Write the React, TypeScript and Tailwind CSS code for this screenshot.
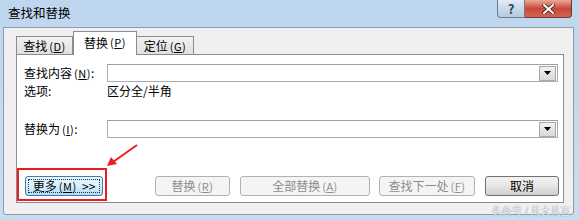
import React from "react";

const font = { fontFamily: '"Noto Sans CJK SC", "Noto Sans", sans-serif' };

function U({ c }: { c: string }) {
  return (
    <span className="text-[11px] ml-[2px] tracking-[0.5px]">
      (<span className="underline underline-offset-1">{c}</span>)
    </span>
  );
}

function Combo({ w }: { w: string }) {
  return (
    <div className={`h-[18px] ${w} bg-white border border-[#abadb3] border-t-[#a0a0a0] flex items-center justify-end pr-[1px]`}>
      <div className="w-[17px] h-[15px] bg-gradient-to-b from-[#f2f2f2] to-[#d8d8d8] border border-[#a9a9a9] flex items-center justify-center">
        <svg width="7" height="4" viewBox="0 0 7 4">
          <path d="M0 0 H7 L3.5 4 Z" fill="#000" />
        </svg>
      </div>
    </div>
  );
}

function Btn({
  children,
  w,
  disabled,
  className = "",
}: {
  children: React.ReactNode;
  w: string;
  disabled?: boolean;
  className?: string;
}) {
  if (disabled) {
    return (
      <div
        className={`${w} h-[20px] rounded-[3px] border border-[#adb2b5] bg-[#f4f4f4] text-[#8d8d8d] flex items-center justify-center text-[12px] ${className}`}
      >
        {children}
      </div>
    );
  }
  return (
    <div
      className={`${w} h-[20px] rounded-[3px] border border-[#707070] bg-gradient-to-b from-[#f3f3f3] via-[#e6e6e6] to-[#d0d0d0] text-black flex items-center justify-center text-[12px] ${className}`}
    >
      {children}
    </div>
  );
}

export default function App() {
  return (
    <div
      className="relative w-[579px] h-[220px] overflow-hidden bg-gradient-to-b from-[#bfd6ef] to-[#c9ddf2]"
      style={font}
    >
      {/* title bar */}
      <div className="h-[27px] flex items-start">
        <div className="pl-[8px] pt-[4px] text-[12.5px] text-black leading-[18px]">查找和替换</div>
        <div className="ml-auto mr-[7px] flex">
          <div className="w-[28px] h-[18px] rounded-bl-[4px] border border-t-0 border-[#6b7c92] bg-gradient-to-b from-[#e4edf7] via-[#c9d8ea] to-[#b7cbe2] flex items-center justify-center text-[13px] font-bold text-[#36465a] leading-none">
            ?
          </div>
          <div className="w-[47px] h-[18px] rounded-br-[4px] border border-t-0 border-l-0 border-[#6b3a36] bg-gradient-to-b from-[#e8a898] via-[#c9483a] to-[#d5624f] flex items-center justify-center">
            <svg width="13" height="10" viewBox="0 0 13 10">
              <path d="M2 1 L11 9 M11 1 L2 9" stroke="#4a2520" strokeWidth="3.6" strokeLinecap="square" />
              <path d="M2 1 L11 9 M11 1 L2 9" stroke="#ffffff" strokeWidth="2" strokeLinecap="square" />
            </svg>
          </div>
        </div>
      </div>

      {/* client */}
      <div className="ml-[3px] w-[571px] h-[188px] bg-[#f0f0f0] border border-[#8d9aab] rounded-b-[3px] pt-[3px] pl-[12px]">
        {/* tabs */}
        <div className="flex items-end h-[23px] relative z-10">
          <div className="w-[57px] h-[18px] border border-b-0 border-[#898c95] bg-gradient-to-b from-[#f2f2f2] to-[#e0e0e0] flex items-center justify-center text-[12px] text-black pt-[1px]">
            查找<U c="D" />
          </div>
          <div className="w-[64px] h-[24px] -mb-[1px] border border-b-0 border-[#898c95] bg-white flex items-center justify-center text-[12px] text-black pb-[2px]">
            替换<U c="P" />
          </div>
          <div className="w-[57px] h-[18px] border border-b-0 border-l-0 border-[#898c95] bg-gradient-to-b from-[#f2f2f2] to-[#e0e0e0] flex items-center justify-center text-[12px] text-black pt-[1px]">
            定位<U c="G" />
          </div>
        </div>
        {/* panel */}
        <div className="w-[548px] h-[149px] bg-white border border-[#898c95] pl-[7px] pt-[9px] text-[12px] text-black">
          <div className="flex h-[18px] items-center">
            <div className="w-[83px]">
              查找内容<U c="N" />:
            </div>
            <Combo w="w-[451px]" />
          </div>
          <div className="flex h-[16px] items-center mt-[1px]">
            <div className="w-[83px]">选项:</div>
            <div>区分全/半角</div>
          </div>
          <div className="flex h-[18px] items-center mt-[21px]">
            <div className="w-[83px]">
              替换为<U c="I" />:
            </div>
            <Combo w="w-[451px]" />
          </div>
          <div className="flex mt-[38px] pl-[1px]">
            <div className="w-[78px] h-[20px] rounded-[3px] border border-[#3c7fb1] bg-gradient-to-b from-[#eaf6fd] via-[#d9f0fc] to-[#a7d9f5] p-[2px]">
              <div className="w-full h-full border border-dotted border-[#333] flex items-center justify-center text-[12px] text-black">
                更多<U c="M" />&nbsp;&nbsp;&gt;&gt;
              </div>
            </div>
            <Btn w="w-[75px]" disabled className="ml-[52px]">
              替换<U c="R" />
            </Btn>
            <Btn w="w-[130px]" disabled className="ml-[10px]">
              全部替换<U c="A" />
            </Btn>
            <Btn w="w-[96px]" disabled className="ml-[9px]">
              查找下一处<U c="F" />
            </Btn>
            <Btn w="w-[74px]" className="ml-[10px]">
              取消
            </Btn>
          </div>
        </div>
      </div>

      {/* red highlight annotation */}
      <div className="absolute left-[17px] top-[168px] w-[90px] h-[33px] border-2 border-[#ee1c1c]" />
      <svg className="absolute left-[100px] top-[140px]" width="45" height="30" viewBox="0 0 45 30">
        <path d="M37 5 L13 22" stroke="#ee1c1c" strokeWidth="2" />
        <path d="M7 26 L11 17 L17 24 Z" fill="#ee1c1c" />
      </svg>

      {/* watermark */}
      <div className="absolute left-[492px] top-[205px] text-[10px] text-white/90 leading-[12px] whitespace-nowrap [text-shadow:0_0_1px_#7d8fa3,0_0_1px_#7d8fa3]">
        头条号 / 凡大凡言
      </div>
    </div>
  );
}
